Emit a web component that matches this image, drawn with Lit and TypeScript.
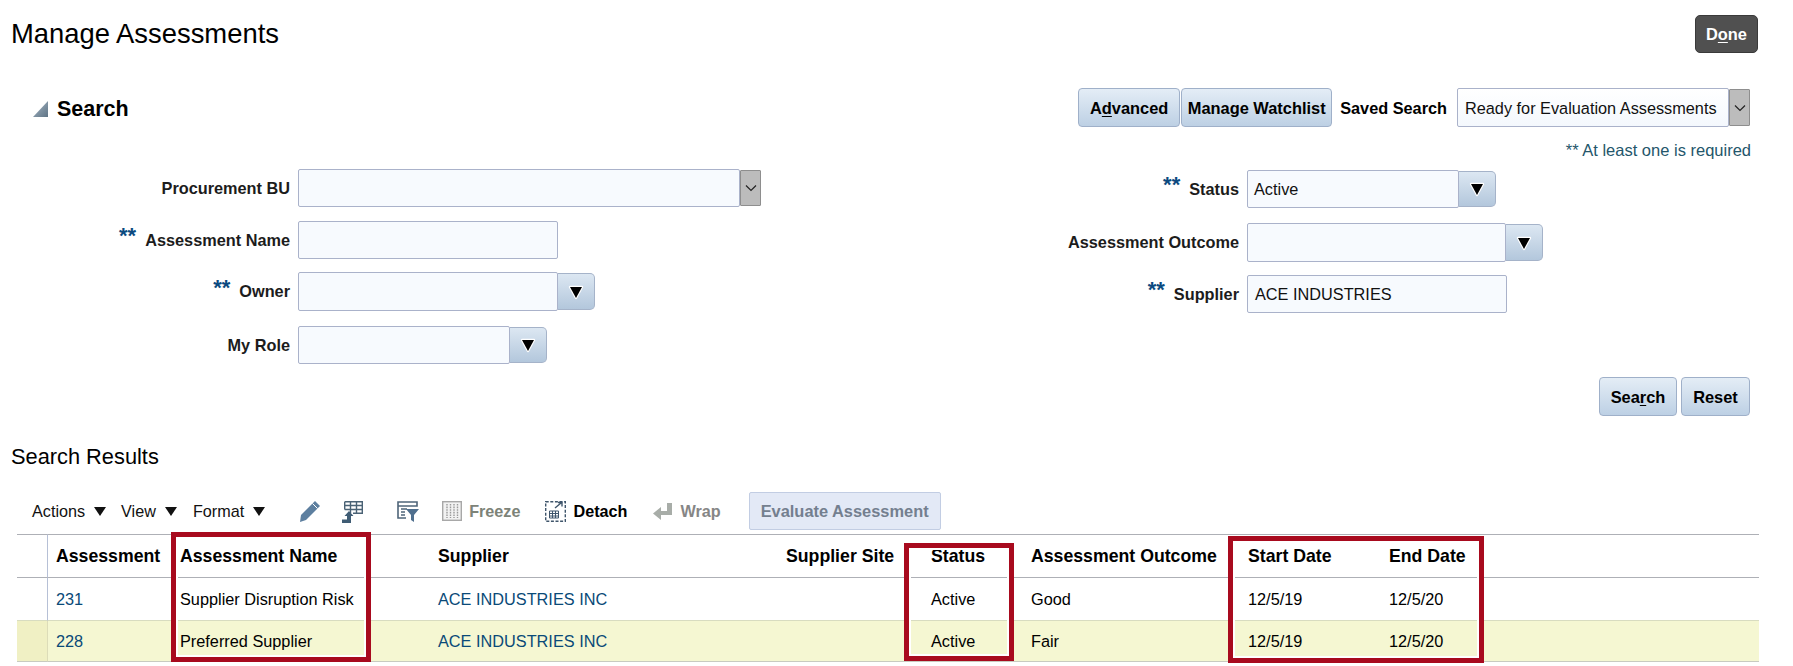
import { LitElement, html, css } from "lit";
import { customElement } from "lit/decorators.js";

const arrowDown = html`<svg class="tri" width="20" height="18" viewBox="0 0 20 18"><path d="M4 4H16L10 15Z" fill="#000" stroke="#fff" stroke-width="2.4" paint-order="stroke" stroke-linejoin="round"/></svg>`;
const chevron = html`<svg width="14" height="10" viewBox="0 0 14 10"><path d="M2 2.5L7 7.5L12 2.5" fill="none" stroke="#222" stroke-width="1.2"/></svg>`;

const leftRows = [
  { label: "Procurement BU", w: 442, h: 38, top: 0, kind: "grey", bw: 21 },
  { label: "Assessment Name", req: true, w: 260, h: 38, top: 14 },
  { label: "Owner", req: true, w: 260, h: 39, top: 13, kind: "blue", bw: 37 },
  { label: "My Role", w: 212, h: 38, top: 15, kind: "blue", bw: 37 },
];
const rightRows = [
  { label: "Status", req: true, w: 212, h: 38, top: 1, kind: "blue", bw: 37, value: "Active" },
  { label: "Assessment Outcome", w: 259, h: 39, top: 15, kind: "blue", bw: 37 },
  { label: "Supplier", req: true, w: 260, h: 38, top: 13, value: "ACE INDUSTRIES", pad: 7 },
];

const rows = [
  { id: "231", name: "Supplier Disruption Risk", supplier: "ACE INDUSTRIES INC", status: "Active", outcome: "Good", start: "12/5/19", end: "12/5/20", sel: false },
  { id: "228", name: "Preferred Supplier", supplier: "ACE INDUSTRIES INC", status: "Active", outcome: "Fair", start: "12/5/19", end: "12/5/20", sel: true },
];
const heads = ["Assessment", "Assessment Name", "Supplier", "Supplier Site", "Status", "Assessment Outcome", "Start Date", "End Date"];
const boxes = [
  { x: 171, y: 532, w: 200, h: 130 },
  { x: 904, y: 543, w: 110, h: 118 },
  { x: 1228, y: 536, w: 256, h: 127 },
];

@customElement("app-root")
export class AppRoot extends LitElement {
  static styles = css`
    :host { display: block; font-family: "Liberation Sans", Arial, sans-serif; color: #000; }
    .page { position: relative; width: 1793px; height: 666px; overflow: hidden; background: #fff; }
    .top { display: flex; justify-content: space-between; align-items: flex-start; padding: 15px 35px 0 11px; }
    h1 { margin: 4px 0 0; font-size: 27.4px; line-height: 30px; font-weight: 400; }
    .btn { display: inline-flex; align-items: center; justify-content: center; height: 39px; box-sizing: border-box; border: 1px solid #9fb0c9; border-radius: 4px; background: linear-gradient(#e4edf6, #bdd0e4); font-size: 16.4px; font-weight: 700; white-space: nowrap; padding-top: 2px; }
    .done { width: 63px; height: 38px; background: #505050; border-color: #3a3a3a; color: #fff; border-radius: 5px; padding-top: 0; }
    u { text-underline-offset: 2px; }
    .search-row { display: flex; justify-content: space-between; align-items: center; margin-top: 35px; padding: 0 43px 0 33px; height: 39px; }
    .search-title { display: flex; align-items: center; gap: 9px; font-size: 21.5px; font-weight: 700; padding-top: 3px; }
    .search-title svg { margin-top: -1px; }
    .controls { display: flex; align-items: center; }
    .adv { width: 102px; margin-right: 1px; }
    .watch { width: 151px; margin-right: 8px; }
    .saved { font-size: 16.3px; font-weight: 700; margin-right: 10px; padding-top: 2px; }
    .note { height: 24px; margin-top: 11px; padding-right: 42px; text-align: right; font-size: 16.5px; line-height: 24px; color: #24566b; }
    .form { display: flex; margin-top: 7px; }
    .col { display: flex; flex-direction: column; }
    .col.l { width: 1000px; --lw: 290px; }
    .col.r { --lw: 239px; }
    .frow { display: flex; align-items: stretch; }
    .label { width: var(--lw); margin-right: 8px; display: flex; justify-content: flex-end; align-items: center; font-size: 16.3px; font-weight: 700; color: #1c1c1c; white-space: nowrap; }
    .req { color: #0b4a80; font-size: 22px; line-height: 1; font-weight: 700; margin-right: 9px; position: relative; top: -4px; }
    .field { box-sizing: border-box; display: flex; align-items: center; padding-left: 6px; height: 100%; background: #f7fafe; border: 1px solid #aab2ca; border-radius: 2px; font-size: 16.3px; color: #111; }
    .ddb { box-sizing: border-box; display: flex; align-items: center; justify-content: center; }
    .ddb.blue { margin: 1px 0; background: linear-gradient(#dce7f2, #b3c7dc); border: 1px solid #a5b3c9; border-left: none; border-radius: 0 5px 5px 0; }
    .ddb.grey { margin: 1px 0; background: #bcbcbc; border: 1px solid #8e8e8e; border-radius: 1px; }
    .saved-field { width: 272px; height: 39px; background: linear-gradient(#fff, #f4f8fd); padding-left: 7px; padding-top: 1px; }
    .saved-btn { width: 21px; height: 37px; }
    .actions { display: flex; justify-content: flex-end; gap: 4px; padding-right: 43px; margin-top: 13px; }
    .actions .s { width: 78px; }
    .actions .x { width: 69px; }
    h2 { margin: 26px 0 0 11px; font-size: 21.8px; line-height: 30px; font-weight: 400; }
    .toolbar { display: flex; align-items: center; height: 38px; margin-top: 20px; font-size: 16.2px; color: #111; }
    .menu { display: flex; align-items: center; gap: 9px; }
    .menu i { width: 0; height: 0; border: 6.5px solid transparent; border-bottom: none; border-top: 9px solid #111; }
    .tb-item { display: flex; align-items: center; gap: 8px; font-weight: 700; }
    .dim { color: #868686; }
    .eval { width: 192px; height: 38px; background: #e3e9f6; border: 1px solid #c2cde3; border-radius: 2px; color: #747f8f; display: flex; align-items: center; justify-content: center; font-size: 16.4px; font-weight: 700; box-sizing: border-box; }
    .table { margin: 4px 0 0 17px; width: 1742px; display: grid; grid-template-columns: 31px 124px 258px 348px 145px 100px 217px 141px 120px 1fr; }
    .cell { display: flex; align-items: center; padding: 0 0 0 8px; white-space: nowrap; font-size: 16.3px; border-bottom: 1px solid #d8dcc0; height: 43px; box-sizing: border-box; }
    .h { height: 44px; font-size: 17.7px; font-weight: 700; border-top: 1px solid #aeb0b6; border-bottom: 1px solid #aeb0b6; }
    .gut { padding: 0; border-right: 1px solid #b6c0d6; }
    .sel { background: #f5f7d2; height: 41px; border-bottom-color: #c8cbc0; }
    .gut.sel { background: #f0f0c4; border-right-color: #dcdcb8; }
    .link { color: #0a4a78; }
    .redbox { position: absolute; box-sizing: border-box; border: 5px solid #a80a1e; box-shadow: inset 0 0 0 2px #fff; pointer-events: none; }
  `;

  private field(r: any) {
    return html`<div class="frow" style="height:${r.h}px;margin-top:${r.top}px">
      <div class="label">${r.req ? html`<span class="req">**</span>` : ""}${r.label}</div>
      <div class="field" style="width:${r.w}px;padding-left:${r.pad ?? 6}px">${r.value ?? ""}</div>
      ${r.kind
        ? html`<div class="ddb ${r.kind}" style="width:${r.bw}px">${r.kind === "blue" ? arrowDown : chevron}</div>`
        : ""}
    </div>`;
  }

  render() {
    return html`<div class="page">
      <div class="top">
        <h1>Manage Assessments</h1>
        <div class="btn done">D<u>o</u>ne</div>
      </div>
      <div class="search-row">
        <div class="search-title">
          <svg width="15" height="16" viewBox="0 0 15 16"><defs><linearGradient id="tg" x1="0" y1="0" x2="1" y2="1"><stop offset="0" stop-color="#a7b8c6"/><stop offset="1" stop-color="#5f7485"/></linearGradient></defs><path d="M15 0V16H0Z" fill="url(#tg)"/></svg>
          <span>Search</span>
        </div>
        <div class="controls">
          <div class="btn adv">A<u>d</u>vanced</div>
          <div class="btn watch">Manage Watchlist</div>
          <span class="saved">Saved Search</span>
          <div class="field saved-field">Ready for Evaluation Assessments</div>
          <div class="ddb grey saved-btn">${chevron}</div>
        </div>
      </div>
      <div class="note">** At least one is required</div>
      <div class="form">
        <div class="col l">${leftRows.map((r) => this.field(r))}</div>
        <div class="col r">${rightRows.map((r) => this.field(r))}</div>
      </div>
      <div class="actions">
        <div class="btn s">Sea<u>r</u>ch</div>
        <div class="btn x">Reset</div>
      </div>
      <h2>Search Results</h2>
      <div class="toolbar">
        <div class="menu" style="margin-left:32px">Actions<i></i></div>
        <div class="menu" style="margin-left:15px">View<i></i></div>
        <div class="menu" style="margin-left:16px">Format<i></i></div>
        <svg style="margin-left:34px" width="22" height="22" viewBox="0 0 22 22"><path d="M16 1L21 6L7 20L1 22L2 15Z" fill="#5d7f9f"/><path d="M13.5 3.5L18.5 8.5" stroke="#fff" stroke-width="1"/></svg>
        <svg style="margin-left:21px" width="22" height="23" viewBox="0 0 22 23"><g fill="none" stroke="#4a6275" stroke-width="1.4"><path d="M2.7 1.7H20.3V13.3H11M2.7 5.5H20.3M2.7 9.5H20.3M8.5 1.7V13.3M14.5 1.7V13.3M2.7 1.7V9.5"/></g><path d="M0 23V19.5H5V16H2.5L7 11L11.5 16H9V23Z" fill="#3f5c74"/></svg>
        <svg style="margin-left:33px" width="22" height="21" viewBox="0 0 22 21"><g fill="none" stroke="#4f6579" stroke-width="1.6"><path d="M1 1H20V5H1ZM1 1V17H9"/><path d="M4 8H10M4 11H8M4 14H8" /></g><path d="M9 8H22L17 14V21L14 19V14Z" fill="#4f6f8e"/></svg>
        <svg style="margin-left:23px" width="20" height="20" viewBox="0 0 20 20"><rect x=".7" y=".7" width="18.6" height="18.6" fill="#f2f2f2" stroke="#a8a8a8" stroke-width="1.4"/><g stroke="#9a9a9a" stroke-width="1.4" stroke-dasharray="1.6 1"><path d="M5 3V17M8.5 3V17M12 3V17M15.5 3V17"/></g></svg>
        <div class="tb-item dim" style="margin-left:7px;color:#7d8378">Freeze</div>
        <svg style="margin-left:25px" width="21" height="22" viewBox="0 0 21 22"><rect x=".7" y="1.7" width="19.6" height="19.6" fill="none" stroke="#3f556b" stroke-width="1.4" stroke-dasharray="3 1.6"/><g fill="none" stroke="#3f556b" stroke-width="1"><path d="M4.5 11H13.5V18H4.5ZM4.5 13.5H13.5M4.5 16H13.5M7.5 11V18M10.5 11V18"/></g><path d="M10 8L16 3M13 2.5H17V6.5" fill="none" stroke="#3f556b" stroke-width="1.4"/></svg>
        <div class="tb-item" style="margin-left:7px;color:#000">Detach</div>
        <svg style="margin-left:26px" width="20" height="19" viewBox="0 0 20 19"><path d="M14 1H19V13H8V18L0 11.5L8 5V9H14Z" fill="#a8ada8"/></svg>
        <div class="tb-item dim" style="margin-left:7px">Wrap</div>
        <div class="eval" style="margin-left:28px">Evaluate Assessment</div>
      </div>
      <div class="table">
        <div class="cell h gut"></div>
        ${heads.map((h) => html`<div class="cell h">${h}</div>`)}
        <div class="cell h"></div>
        ${rows.map(
          (r) => html`
            <div class="cell gut ${r.sel ? "sel" : ""}"></div>
            <div class="cell link ${r.sel ? "sel" : ""}">${r.id}</div>
            <div class="cell ${r.sel ? "sel" : ""}">${r.name}</div>
            <div class="cell link ${r.sel ? "sel" : ""}">${r.supplier}</div>
            <div class="cell ${r.sel ? "sel" : ""}"></div>
            <div class="cell ${r.sel ? "sel" : ""}">${r.status}</div>
            <div class="cell ${r.sel ? "sel" : ""}">${r.outcome}</div>
            <div class="cell ${r.sel ? "sel" : ""}">${r.start}</div>
            <div class="cell ${r.sel ? "sel" : ""}">${r.end}</div>
            <div class="cell ${r.sel ? "sel" : ""}"></div>
          `
        )}
      </div>
      ${boxes.map((b) => html`<div class="redbox" style="left:${b.x}px;top:${b.y}px;width:${b.w}px;height:${b.h}px"></div>`)}
    </div>`;
  }
}
